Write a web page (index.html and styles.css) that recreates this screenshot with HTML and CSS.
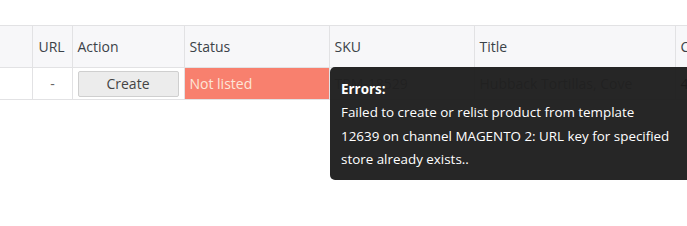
FILE: index.html
```html
<!DOCTYPE html>
<html lang="en">
<head>
    <meta charset="UTF-8">
    <title>Listings</title>
    <link rel="stylesheet" href="styles.css">
</head>
<body>
    <div class="grid-wrap">
        <table class="grid">
            <thead>
                <tr>
                    <th class="c-sel"></th>
                    <th class="c-url">URL</th>
                    <th class="c-action">Action</th>
                    <th class="c-status">Status</th>
                    <th class="c-sku">SKU</th>
                    <th class="c-title">Title</th>
                    <th class="c-more">C</th>
                </tr>
            </thead>
            <tbody>
                <tr>
                    <td class="c-sel"></td>
                    <td class="c-url dash">-</td>
                    <td class="c-action"><button class="btn">Create</button></td>
                    <td class="c-status not-listed">Not listed</td>
                    <td class="c-sku">TPM-18529</td>
                    <td class="c-title">Hubback Tortillas, Cove</td>
                    <td class="c-more">4</td>
                </tr>
            </tbody>
        </table>

        <div class="tip">
            <div class="tip-head">Errors:</div>
            <div class="tip-body">Failed to create or relist product from template 12639 on channel MAGENTO 2: URL key for specified store already exists..</div>
        </div>
    </div>
</body>
</html>
```

FILE: styles.css
```css
*{
    margin: 0;
    padding: 0;
    box-sizing: border-box;
}
html,body{
    height: 100%;
}
body{
    background-color: #fff;
    font-family: "Open Sans", "Noto Sans", sans-serif;
    font-size: 14px;
    color: #333;
    overflow: hidden;
}
.grid-wrap{
    position: relative;
    padding-top: 25px;
    width: 760px;
}
.grid{
    border-collapse: collapse;
    table-layout: fixed;
    width: 760px;
}
.grid th,
.grid td{
    border: 1px solid #e2e2e4;
    text-align: left;
    white-space: nowrap;
    overflow: hidden;
}
.grid th{
    height: 42px;
    padding: 0 5px;
    background-color: #f7f7f9;
    font-weight: normal;
    color: #3b4248;
}
.grid td{
    height: 32px;
    padding: 0 5px;
}
.grid .c-sel{
    width: 32px;
    border-left: none;
}
.grid .c-url{ width: 40px; padding-left: 6px; }
.grid .c-action{ width: 112px; }
.grid .c-status{ width: 145px; }
.grid .c-sku{ width: 145px; }
.grid .c-title{ width: 201px; }
.grid .c-more{ width: 85px; }
.grid td.dash{
    text-align: center;
    color: #666;
}
.grid td.c-action{
    padding: 2px 5px;
}
.btn{
    width: 101px;
    height: 26px;
    border: 1px solid #cfcfcf;
    border-radius: 2px;
    background-color: #ececec;
    font-family: inherit;
    font-size: 14px;
    color: #444;
}
.grid td.not-listed{
    background-color: #f8806e;
    color: #fde6d8;
}
.grid td.c-sku,
.grid td.c-title{
    color: #999;
}
.tip{
    position: absolute;
    left: 330px;
    top: 67px;
    width: 380px;
    padding: 11px 12px 9px 11px;
    border-radius: 5px;
    background-color: rgba(26, 26, 26, 0.95);
    color: #fff;
    font-size: 13.4px;
    line-height: 23.3px;
}
.tip-head{
    font-weight: bold;
}
.tip-body{
    width: 331px;
}
```
